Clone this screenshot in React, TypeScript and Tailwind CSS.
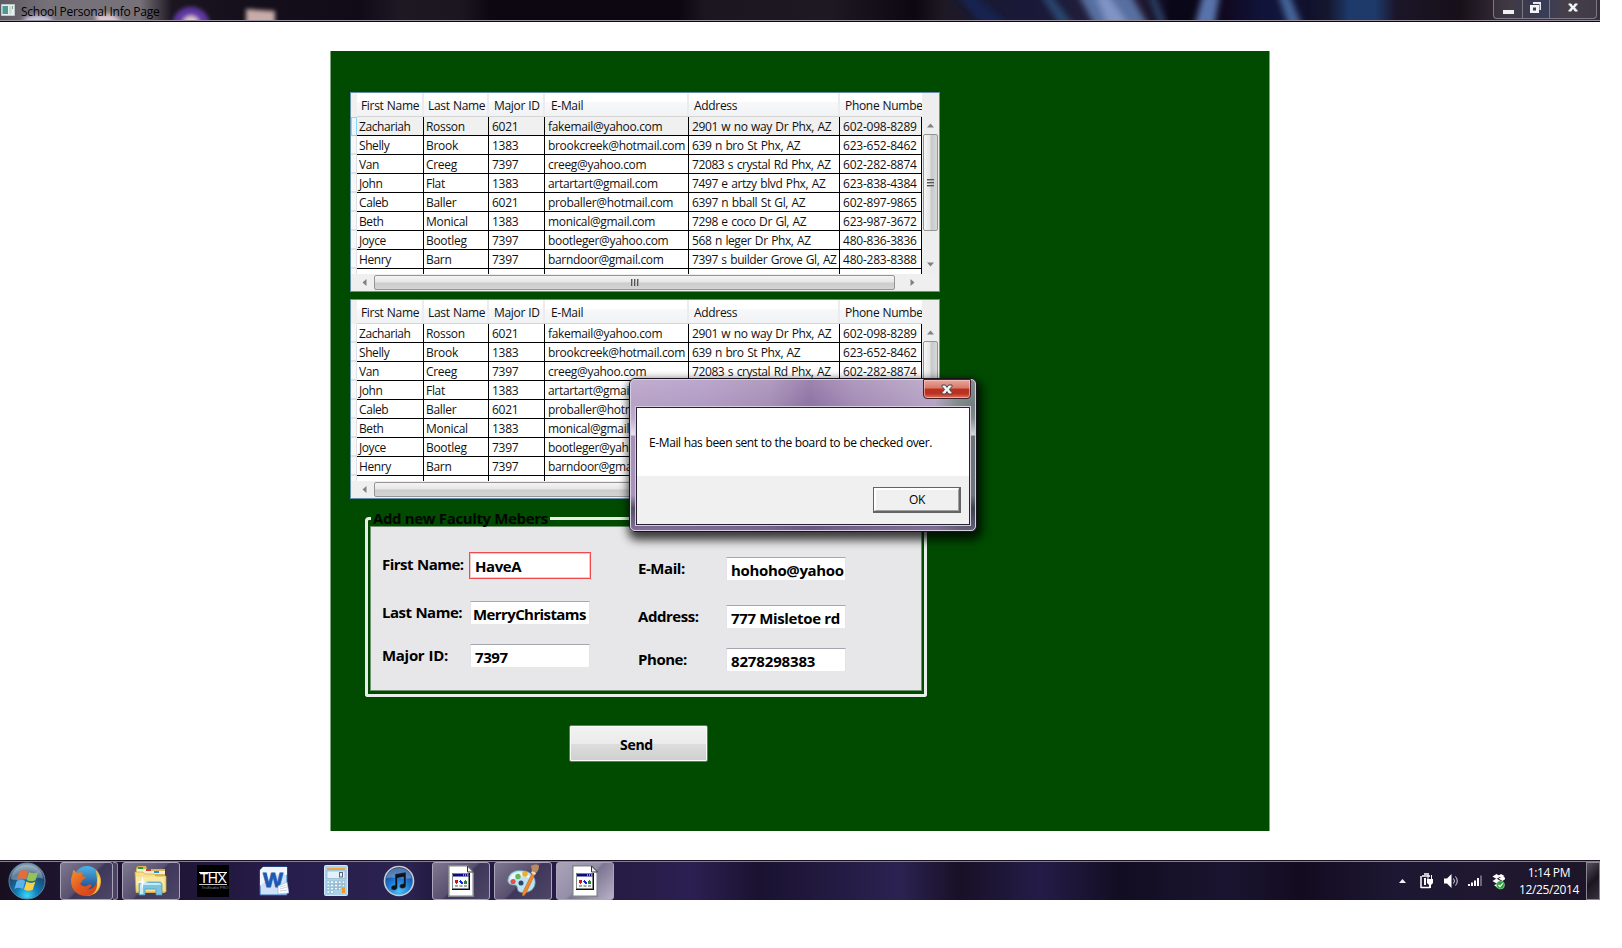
import React from "react";

const people = [
  ["Zachariah", "Rosson", "6021", "fakemail@yahoo.com", "2901 w no way Dr Phx, AZ", "602-098-8289"],
  ["Shelly", "Brook", "1383", "brookcreek@hotmail.com", "639 n bro St Phx, AZ", "623-652-8462"],
  ["Van", "Creeg", "7397", "creeg@yahoo.com", "72083 s crystal Rd Phx, AZ", "602-282-8874"],
  ["John", "Flat", "1383", "artartart@gmail.com", "7497 e artzy blvd Phx, AZ", "623-838-4384"],
  ["Caleb", "Baller", "6021", "proballer@hotmail.com", "6397 n bball St Gl, AZ", "602-897-9865"],
  ["Beth", "Monical", "1383", "monical@gmail.com", "7298 e coco Dr Gl, AZ", "623-987-3672"],
  ["Joyce", "Bootleg", "7397", "bootleger@yahoo.com", "568 n leger Dr Phx, AZ", "480-836-3836"],
  ["Henry", "Barn", "7397", "barndoor@gmail.com", "7397 s builder Grove Gl, AZ", "480-283-8388"],
];

const columns = [
  { title: "First Name", width: "w-[67px]", pad: "pl-[4px]", cell: "pl-[2px] tracking-[-0.42px]" },
  { title: "Last Name", width: "w-[65px]", pad: "pl-[4px]", cell: "pl-[2px] tracking-[-0.3px]" },
  { title: "Major ID", width: "w-[56px]", pad: "pl-[5px]", cell: "pl-[3px] tracking-[-0.25px]" },
  { title: "E-Mail", width: "w-[144px]", pad: "pl-[6px]", cell: "pl-[3px] tracking-[-0.32px]" },
  { title: "Address", width: "w-[151px]", pad: "pl-[5px]", cell: "pl-[3px] tracking-[-0.4px] [word-spacing:0.8px]" },
  { title: "Phone Numbe", width: "w-[82px]", pad: "pl-[5px]", cell: "pl-[3px] tracking-[-0.22px]" },
];

function Arrow({ d, className }: { d: string; className?: string }) {
  return (
    <svg width="7" height="7" viewBox="0 0 7 7" className={className}>
      <path d={d} fill="#808080" />
    </svg>
  );
}

function DataGrid({ selected }: { selected?: boolean }) {
  return (
    <div className="flex h-[200px] w-[590px] flex-col overflow-hidden border border-[#688caf] bg-[#f0f0f0] text-[12px] text-[#111]">
      <div className="flex h-[181px]">
        <div className="flex w-[6px] flex-col bg-[#f0f0f0]">
          <div className="h-6" />
          {people.map((p, i) => (
            <div
              key={p[0]}
              className={
                selected && i === 0
                  ? "h-[19px] border border-[#8fd3f5] bg-[#eef6fb]"
                  : "h-[19px] border-b-2 border-r border-[#dfe1e4] bg-[#f7f8fa]"
              }
            />
          ))}
          <div className="flex-1 border-r border-[#dfe1e4] bg-[#f7f8fa]" />
        </div>
        <div className="w-[565px] overflow-hidden bg-white">
          <div className="flex h-6 border-b border-[#d5d5d5] bg-[linear-gradient(#fff_0%,#fff_40%,#f7f8fa_41%,#f1f2f4_100%)]">
            {columns.map((c) => (
              <div key={c.title} className={`${c.width} ${c.pad} shrink-0 border-r-2 border-[#ececef] whitespace-nowrap leading-[25px] tracking-[-0.32px] [word-spacing:0.5px] last:border-r-0`}>
                {c.title}
              </div>
            ))}
          </div>
          {people.map((p, i) => (
            <div key={p[0]} className={`flex h-[19px] border-b border-black ${selected && i === 0 ? "bg-[#f0f0f0]" : "bg-white"}`}>
              {p.map((v, k) => (
                <div key={k} className={`${columns[k].width} ${columns[k].cell} shrink-0 whitespace-nowrap border-r border-black leading-[19px]`}>
                  {v}
                </div>
              ))}
            </div>
          ))}
          <div className="flex h-[5px]">
            {columns.map((c) => (
              <div key={c.title} className={`${c.width} shrink-0 border-r border-black`} />
            ))}
          </div>
        </div>
        <div className="flex flex-1 flex-col items-center bg-[#eeeeee] pt-6">
          <Arrow d="M0 5.5 L3.5 1.5 L7 5.5Z" className="mt-[5px]" />
          <div className="mt-[5px] flex h-[97px] w-[15px] flex-col items-center justify-center gap-px rounded-[2px] border border-[#959595] bg-[linear-gradient(90deg,#f6f6f6,#e6e6e6_45%,#c6c8ca_55%,#d8d8d8)]">
            {[0, 1, 2].map((n) => (
              <div key={n} className="h-[2px] w-[7px] border-b border-[#aaa] bg-[#555]" />
            ))}
          </div>
          <Arrow d="M0 1.5 L3.5 5.5 L7 1.5Z" className="mt-[30px]" />
        </div>
      </div>
      <div className="flex flex-1 items-center bg-[#efefef]">
        <Arrow d="M5.5 0 L1.5 3.5 L5.5 7Z" className="ml-[10px]" />
        <div className="ml-[6px] flex h-[15px] w-[521px] items-center justify-center gap-px rounded-[2px] border border-[#959595] bg-[linear-gradient(#f4f4f4,#e6e6e6_45%,#cbcccd_55%,#d4d4d4)]">
          {[0, 1, 2].map((n) => (
            <div key={n} className="h-[7px] w-[2px] border-r border-[#aaa] bg-[#555]" />
          ))}
        </div>
        <Arrow d="M1.5 0 L5.5 3.5 L1.5 7Z" className="ml-[14px]" />
      </div>
    </div>
  );
}

function TextBox({ value, error, tight }: { value: string; error?: boolean; tight?: boolean }) {
  return (
    <div
      className={
        error
          ? "-ml-px flex h-[27px] w-[122px] items-center overflow-hidden border border-[#f04c50] bg-white pl-[5px] pt-[2px] outline-1 -outline-offset-2 outline-[#fac4c6]"
          : `flex h-[23px] w-[120px] items-center overflow-hidden border-x border-t border-x-[#e2e3ea] border-t-[#a5a7af] bg-white pt-[3px] ${tight ? "pl-[2px] tracking-[-0.6px]" : "pl-[4px]"}`
      }
    >
      <span className="whitespace-nowrap">{value}</span>
    </div>
  );
}

function GroupBox() {
  return (
    <fieldset className="h-[180px] w-[562px] min-w-0">
      <div className="flex h-[9px] items-start">
        <div className="h-[9px] w-[6px] rounded-tl-[4px] border-l-[3px] border-t-[3px] border-[#e9eeea]" />
        <div className="flex h-[9px] w-[179px] items-start pl-[2px]">
          <span className="relative -mt-[9px] whitespace-nowrap text-[15px] font-bold leading-5 tracking-[-0.36px] text-[#020602]">Add new Faculty Mebers</span>
        </div>
        <div className="h-[9px] flex-1 rounded-tr-[4px] border-r-[3px] border-t-[3px] border-[#e9eeea]" />
      </div>
      <div className="h-[171px] rounded-b-[3px] border-x-[3px] border-b-[3px] border-[#e9eeea] px-[2px] pb-[3px]">
        <div className="flex h-full border border-[#6f916f] bg-[#e7e7e9] text-[15px] font-bold text-black">
          <div className="flex pl-[11px]">
            <div className="flex w-[88px] flex-col whitespace-nowrap pt-[27px] leading-5 tracking-[-0.5px] [word-spacing:0.5px]">
              <div className="h-12">First Name:</div>
              <div className="h-[43px]">Last Name:</div>
              <div className="tracking-[-0.3px]">Major ID:</div>
            </div>
            <div className="flex flex-col pt-[25px] tracking-[-0.4px]">
              <div className="h-[49px]"><TextBox value="HaveA" error /></div>
              <div className="h-[43px]"><TextBox value="MerryChristams" tight /></div>
              <TextBox value="7397" />
            </div>
          </div>
          <div className="flex pl-[47px]">
            <div className="flex w-[88px] flex-col whitespace-nowrap pt-[31px] leading-5 tracking-[-0.45px]">
              <div className="h-12">E-Mail:</div>
              <div className="h-[43px]">Address:</div>
              <div>Phone:</div>
            </div>
            <div className="flex flex-col pt-[30px] tracking-[-0.35px]">
              <div className="h-12"><TextBox value="hohoho@yahoo" /></div>
              <div className="h-[43px]"><TextBox value="777 Misletoe rd" /></div>
              <div className="tracking-[-0.15px]"><TextBox value="8278298383" /></div>
            </div>
          </div>
        </div>
      </div>
    </fieldset>
  );
}

function CrossGlyph({ width = 12 }: { width?: number }) {
  return (
    <svg width={width} height="11" viewBox="0 0 12 11">
      <path d="M1 1h3.4L6 3.4 7.6 1H11v1.4L8.4 5.500 11 8.600V10H7.600L6 7.600 4.400 10H1V8.600l2.600-3.100L1 2.400z" fill="#f4f5f7" stroke="#464452" strokeWidth="1" />
    </svg>
  );
}

function MessageDialog() {
  return (
    <div className="absolute left-[629px] top-[378px] flex h-[154px] w-[348px] flex-col rounded-[6px] border border-[#1b1420] bg-[linear-gradient(90deg,#b8a2c6_0%,#b29cc6_20%,#a78fb7_40%,#8e73a4_52%,#a48bb5_64%,#b6a4c5_88%,#7d8a88_95%,#717d7e_100%)] shadow-[2px_5px_10px_3px_rgba(0,0,0,0.75)]">
      <div className="flex flex-1 flex-col rounded-[5px] border border-[#d9cfe2] bg-[linear-gradient(rgba(255,255,255,0.12)_0px,rgba(255,255,255,0)_25px,rgba(255,255,255,0.1)_38px,rgba(255,255,255,0.7)_55px,rgba(60,40,90,0.15)_56px,rgba(60,40,90,0.1)_115px,rgba(30,35,50,0.65)_128px,rgba(80,60,110,0.5)_150px)] px-[4px]">
        <div className="flex h-[26px] items-start justify-end">
          <div className="-mt-px flex h-[20px] w-[48px] items-center justify-center rounded-b-[4px] border border-[#43202d] bg-[linear-gradient(#e5a99d_0%,#d67968_45%,#bd2f1d_50%,#b93222_75%,#dd7357_100%)] shadow-[inset_0_0_0_1px_rgba(255,210,200,0.6)]">
            <CrossGlyph />
          </div>
        </div>
        <div className="flex h-[120px] flex-col border border-[#d7cddd]">
          <div className="flex flex-1 flex-col border border-[#272030] bg-[#f0f0f0]">
            <div className="flex h-[68px] items-center bg-white pl-[12px] pt-px">
              <span className="whitespace-nowrap text-[12px] tracking-[-0.38px] text-black [word-spacing:0.3px]">E-Mail has been sent to the board to be checked over.</span>
            </div>
            <div className="flex justify-end pr-[8px] pt-[11px]">
              <div className="h-[26px] w-[88px] border border-b-2 border-r-2 border-[#646464] bg-[#f0f0f0]">
                <div className="flex h-full items-center justify-center border-b border-l-2 border-r border-t-2 border-b-[#a0a0a0] border-l-white border-r-[#a0a0a0] border-t-white text-[12px] tracking-[-0.3px] text-black">OK</div>
              </div>
            </div>
          </div>
        </div>
      </div>
    </div>
  );
}

function TitleBar() {
  return (
    <header className="relative flex h-[22px] w-[1600px] items-start overflow-hidden border-b border-[#0c0812] bg-[linear-gradient(90deg,#5f5a61_0px,#777279_50px,#777279_140px,#1b1620_172px,#15101b_230px,#110b18_360px,#1e1823_400px,#1c1621_462px,#0d0711_490px,#0d0711_680px,#1c1621_705px,#1e1823_830px,#0d0711_915px,#1e1823_942px,#1a1a34_985px,#191839_1030px,#1c1c3a_1060px,#2a2038_1130px,#120b22_1165px,#0a0719_1170px,#0a0719_1188px,#10071c_1219px,#10133a_1262px,#11163b_1280px,#11102c_1307px,#14172e_1328px,#1e3a6b_1350px,#1d3a6a_1375px,#1b1528_1396px,#171019_1460px,#2d2530_1492px,#37303b_1510px,#2c3250_1542px,#3c3540_1565px,#36303c_1600px)]">
      <svg width="1400" height="21" viewBox="0 0 1400 21" className="absolute left-0 top-0">
        <defs>
          <filter id="haze"><feGaussianBlur stdDeviation="2" /></filter>
          <filter id="glow"><feGaussianBlur stdDeviation="3" /></filter>
        </defs>
        <g filter="url(#haze)">
          <circle cx="191" cy="26" r="19" fill="#6038a6" />
          <circle cx="191" cy="24" r="8" fill="#e5cdcd" />
          <path d="M246 9l29 2v14h-29z" fill="#c7aca9" />
          <ellipse cx="38" cy="22" rx="15" ry="7" fill="#c8c5e0" />
          <path d="M95 14h18l14 12H98z" fill="#dbc5cf" />
        </g>
        <g filter="url(#glow)">
          <path d="M955-6h18l40 34h-28z" fill="#16244f" />
          <path d="M1040-6h10l26 34h-14z" fill="#2a4670" />
          <path d="M1078-6h52l20 34h-54z" fill="#566fa0" />
          <path d="M1095-6h12l24 34h-22z" fill="#8094c4" />
          <path d="M1148-6h6l14 34h-8z" fill="#29446b" />
          <path d="M1203-6h17l-6 34h-20z" fill="#5873ac" />
          <path d="M1278-6h11l14 34h-14z" fill="#45659a" />
        </g>
      </svg>
      <div className="relative flex h-5 flex-1 items-center pl-px">
        <svg width="14" height="12" viewBox="0 0 14 12">
          <path d="M.5.5h13v11H.5z" fill="#e8eeee" stroke="#bfc5c9" />
          <path d="M1.500 2h5.500v8H1.500z" fill="#4d9a92" />
          <path d="M8 2h2.500v8H8z" fill="#cbdad2" />
          <path d="M11 2h1v3h-1z" fill="#7aa98a" />
        </svg>
        <span className="ml-[6px] whitespace-nowrap pt-[3px] text-[12px] leading-4 tracking-[-0.24px] text-black">School Personal Info Page</span>
      </div>
      <div className="relative mr-[3px] flex h-[19px] w-[104px] rounded-b-[4px] border border-t-0 border-[#7d7884] bg-white/5">
        <div className="flex w-[29px] items-center justify-center border-r border-[#7d7884] pt-[3px]">
          <div className="mt-[2px] h-[4px] w-[11px] bg-[#f0f0f2]" />
        </div>
        <div className="flex w-[27px] items-center justify-center border-r border-[#7d7884] pb-[3px]">
          <svg width="12" height="12" viewBox="0 0 12 12"><path d="M3 0h8v8H9.500V2H3z" fill="#e9e9ee" /><path fillRule="evenodd" d="M0 3h9v8H0z M3 5.500v3h3v-3z" fill="#f4f4f6" /></svg>
        </div>
        <div className="flex flex-1 items-center justify-center pb-[3px]"><CrossGlyph /></div>
      </div>
      <div className="absolute bottom-0 left-0 h-px w-full bg-[#9a919f]" />
    </header>
  );
}

function StartOrb() {
  return (
    <svg width="38" height="38" viewBox="0 0 38 38">
      <defs>
        <radialGradient id="orb" cx="50%" cy="90%" r="85%">
          <stop offset="0" stopColor="#39d8fb" /><stop offset=".35" stopColor="#127db7" /><stop offset=".75" stopColor="#1f476e" /><stop offset="1" stopColor="#8098ae" />
        </radialGradient>
      </defs>
      <circle cx="19" cy="19" r="18" fill="url(#orb)" stroke="#5a89a8" />
      <path d="M3 17C4 7 12 3 19 3s15 4 16 14c-9-4-22 4-32 0z" fill="#fff" opacity=".3" />
      <path d="M11.500 9.500c3-2 6-1.500 8.500 0l-2.400 8c-3-1.600-5.500-1.800-8.500 0z" fill="#ec6a35" />
      <path d="M21 10c3 1.700 6 1.800 9 .3l-2.500 8c-3 1.500-6 1.300-8.800-.3z" fill="#94c455" />
      <path d="M8.700 19c3-1.700 6-1.500 8.600 0l-2.400 8c-3-1.700-5.700-1.700-8.500 0z" fill="#5fb2ec" />
      <path d="M18.400 19.600c3 1.600 6 1.800 8.900.2l-2.500 8c-3 1.600-6 1.300-8.800-.3z" fill="#fbcf45" />
    </svg>
  );
}

function FirefoxIcon() {
  return (
    <svg width="32" height="32" viewBox="0 0 32 32">
      <defs>
        <linearGradient id="fx" x1="0" y1="0" x2="1" y2="1"><stop offset="0" stopColor="#f0932c" /><stop offset=".5" stopColor="#e2571f" /><stop offset="1" stopColor="#d0401a" /></linearGradient>
        <linearGradient id="globe" x1="0" y1="0" x2="0" y2="1"><stop offset="0" stopColor="#4db5e8" /><stop offset="1" stopColor="#1a3d82" /></linearGradient>
      </defs>
      <circle cx="17" cy="14" r="13" fill="url(#globe)" />
      <path d="M26 5c4 4 6 9 4.500 15C29 27 23 31 16 31l2-6c6 0 9-4 9-10 0-4-1-7-1-10z" fill="#f8b731" />
      <path d="M28 10c2 3 2 7 1 11-1 2-2 3-3 4 2-5 2-10 2-15z" fill="#ffe069" />
      <path d="M3 5c1 0 3 2 4 3 2-1 5-1 7 0-2 1-2 2-2 3l4 1c0 2-3 2-4 4 0 2-1 2-2 2 1 4 6 4 8 2 2-1 4 0 4 1-2 1-2 3-5 3 4 1 8-2 10-7 1 8-4 14-11 14C8 31 1 25 1 16 1 12 3 10 3 5z" fill="url(#fx)" />
    </svg>
  );
}

function ExplorerIcon() {
  return (
    <svg width="34" height="32" viewBox="0 0 34 32">
      <path d="M2 3l2-2h8l1 3h18v24H2z" fill="#d8b45a" />
      <path d="M3 4h10l2 2h16v3H3z" fill="#f7efc9" />
      <path d="M4 2h5v2H4z" fill="#25a02c" /><path d="M12 4h5v2h-5z" fill="#d9372c" /><path d="M20 6h5v2h-5z" fill="#2c8fd9" />
      <path d="M1 7h8l2 2h9l2 2h10v16H2z" fill="#f5df8d" stroke="#cda64c" strokeWidth=".7" />
      <path d="M2 12h28v8H2z" fill="#fff4b8" opacity=".45" />
      <path d="M5 30V20c0-2 1-3 3-3h17c2 0 3 1 3 3v10h-6v-6H11v6z" fill="#7cc3df" stroke="#4d96b8" strokeWidth=".7" />
      <path d="M6 21c0-2 1-3 3-3h15c2 0 3 1 3 2H9v9H6z" fill="#c5ebf5" />
      <path d="M8.500 11l1 5 5 1-5 1-1 6-1-6-5-1 5-1z" fill="#fff" />
    </svg>
  );
}

function ThxIcon() {
  return (
    <div className="flex h-8 w-8 flex-col items-center bg-black pt-[7px] text-white">
      <div className="h-px w-[28px] bg-white" />
      <div className="font-['Liberation_Sans'] text-[14px] leading-[11px] tracking-[-0.5px]">THX</div>
      <div className="h-px w-[28px] bg-[#ccc]" />
      <div className="whitespace-nowrap pl-1 font-['Liberation_Sans'] text-[4px] leading-[5px] text-[#888]">TruStudio PRO</div>
    </div>
  );
}

function WordIcon() {
  return (
    <svg width="30" height="30" viewBox="0 0 30 30">
      <path d="M4 1h24v28H1V4z" fill="#cfe1f6" stroke="#2c68b4" />
      <path d="M4 1h24v8C18 6 10 12 1 20V4z" fill="#eff6fd" />
      <text x="4" y="21" fontFamily="Liberation Sans" fontWeight="bold" fontSize="21" fill="#1f58b0" stroke="#1f58b0" strokeWidth=".8" textLength="20" lengthAdjust="spacingAndGlyphs">W</text>
      <path d="M19 20l9-4 2 11-11 1z" fill="#fff" stroke="#8aa6cc" strokeWidth=".6" />
      <path d="M21 21l6-2M21 23l7-2M21 25l7-1" stroke="#a9bfdc" strokeWidth=".7" />
    </svg>
  );
}

function CalcIcon() {
  const keys = [0, 1, 2, 3, 4, 5, 6, 7, 8, 9, 10, 11, 12, 13, 14, 15, 16];
  return (
    <svg width="24" height="31" viewBox="0 0 24 31">
      <rect x=".5" y=".5" width="23" height="30" rx="1" fill="#abd2ea" stroke="#d3eaf6" />
      <path d="M3 3h18v2H3z" fill="#eda541" /><path d="M3 6h18v7.500H3z" fill="#e3f1f9" stroke="#86a9bf" strokeWidth=".6" />
      <rect x="15.500" y="7.500" width="3" height="4.500" fill="none" stroke="#58697a" strokeWidth="1" />
      {keys.map((k) => (
        <rect key={k} x={3 + (k % 5) * 3.8} y={16 + Math.floor(k / 5) * 3.3} width="2.600" height="2.200" fill="#f4fbff" stroke="#6b96b3" strokeWidth=".4" />
      ))}
      <path d="M18 23h3v5h-3z" fill="#ee9b2d" />
    </svg>
  );
}

function ItunesIcon() {
  return (
    <svg width="32" height="32" viewBox="0 0 32 32">
      <defs><radialGradient id="tune" cx="50%" cy="85%" r="80%"><stop offset="0" stopColor="#46c4fa" /><stop offset=".5" stopColor="#1b78d6" /><stop offset="1" stopColor="#143a78" /></radialGradient></defs>
      <circle cx="16" cy="16" r="14.500" fill="url(#tune)" stroke="#c8ccd2" strokeWidth="1.600" />
      <path d="M3 13C5 6 10 3 16 3s11 3 13 10c-8 2-18-2-26 0z" fill="#fff" opacity=".28" />
      <path d="M12 9l11-2v13.500c0 2-1.500 3-3.500 3s-3-1-3-2.300c0-1.700 1.700-2.700 4-2.700V12l-6 1.200V22c0 2-1.500 3.200-3.500 3.200S8 24 8 22.800c0-1.800 1.800-2.800 4-2.800z" fill="#0e1320" stroke="#5e8dbc" strokeWidth=".5" />
    </svg>
  );
}

function DocIcon() {
  return (
    <svg width="26" height="32" viewBox="0 0 26 32">
      <path d="M.8.8h18.700l5.700 6V31.200H.8z" fill="#fff" stroke="#84868a" strokeWidth="1.500" />
      <path d="M19.500 1v6h6z" fill="#eee" stroke="#333" />
      <path d="M4 8h18v17H4z" fill="#101010" /><path d="M4.500 8.500h16v15h-16z" fill="#fafafa" stroke="#888" strokeWidth=".6" />
      <path d="M5 9h15.500v2.500H5z" fill="#0a0a83" /><path d="M15 9.500h1v1h-1zM17 9.500h1v1h-1zM19 9.500h1v1h-1z" fill="#fff" />
      <path d="M7 15h2v1h1v2H9v1H8v-1H7z" fill="#d5141d" /><path d="M12 15h1v1h1v1h1v2h-2v-1h-1z" fill="#1428d0" /><path d="M17 15h1v1h1v3h-3v-3h1z" fill="#168c22" />
      <path d="M9 15h1v1H9z" fill="#2428d0" /><path d="M11 16h1v1h-1z" fill="#c82020" />
      <path d="M7 21h3M11.500 21h3M16 21h3" stroke="#555" />
    </svg>
  );
}

function PaintIcon() {
  return (
    <svg width="34" height="33" viewBox="0 0 34 33">
      <path d="M2 15C3 8 11 5 18 7c8 1 12 7 11 13-1 7-9 10-15 8-4-1-1-6-5-7-4 0-8-1-7-6z" fill="#bfe2f2" stroke="#6c9db7" strokeWidth=".8" />
      <path d="M4 14C6 9 12 7 18 9c5 1 8 4 9 8C20 10 12 12 4 17z" fill="#eaf8fd" />
      <circle cx="7" cy="17.500" r="2.600" fill="#df5147" /><circle cx="12" cy="12.500" r="2.700" fill="#64b85a" /><circle cx="19" cy="10" r="2.800" fill="#f0ae2d" /><circle cx="15" cy="19" r="2.500" fill="#28486d" />
      <path d="M27 7l3 1-9 19c-1 3-3 5-4 5s-1-3 1-6z" fill="#ee8b2c" stroke="#a85a1e" strokeWidth=".5" />
      <path d="M25 2c3-2 7-2 8 0 0 3-1 5-3 7l-4-2z" fill="#b98b65" /><path d="M26 7l4 2-1 2-4-2z" fill="#e6dfd5" />
    </svg>
  );
}

function TaskButton({ children, active, className }: { children: React.ReactNode; active?: boolean; className?: string }) {
  return (
    <div className={`flex h-[38px] items-center justify-center rounded-[3px] border border-[#aba5bb] ${active ? "bg-[linear-gradient(135deg,#aaa4b8_0%,#958ea8_48%,#7d7592_52%,#b8b1c6_100%)]" : "bg-[linear-gradient(135deg,#7f7891_0%,#58506d_48%,#3f375a_52%,#4e4666_100%)]"} ${className ?? ""}`}>
      {children}
    </div>
  );
}

function Taskbar() {
  return (
    <footer className="flex h-[40px] w-[1600px] items-center border-t border-[#1a1420] bg-[linear-gradient(90deg,#170f1f_0px,#1f1430_60px,#1f1638_190px,#281e4d_290px,#2a2250_410px,#241b43_430px,#261c45_630px,#2b2053_690px,#1a1230_760px,#2b2252_900px,#181026_960px,#241c48_1040px,#130d22_1120px,#1a1430_1230px,#130c20_1300px,#1d1733_1400px,#201830_1490px,#1c1426_1600px)] shadow-[inset_0_1px_0_#85808f]">
      <div className="ml-2 flex w-[38px]"><StartOrb /></div>
      <div className="ml-[14px] flex">
        <TaskButton className="w-[53px] pr-[2px]"><FirefoxIcon /></TaskButton>
        <div className="h-[38px] w-[5px] rounded-r-[3px] border border-l-0 border-[#8e879f] bg-[#4b4362]" />
      </div>
      <TaskButton className="ml-1 w-[58px]"><ExplorerIcon /></TaskButton>
      <div className="ml-[17px]"><ThxIcon /></div>
      <div className="ml-[30px]"><WordIcon /></div>
      <div className="ml-[35px]"><CalcIcon /></div>
      <div className="ml-[35px]"><ItunesIcon /></div>
      <TaskButton className="ml-[17px] w-[58px]"><DocIcon /></TaskButton>
      <TaskButton className="ml-1 w-[58px]"><PaintIcon /></TaskButton>
      <TaskButton active className="ml-1 w-[58px]"><DocIcon /></TaskButton>
      <div className="flex flex-1 items-center justify-end">
        <svg width="110" height="18" viewBox="0 0 110 18">
          <path d="M4 11l3.500-4 3.500 4z" fill="#f2f2f4" />
          <path d="M27 4h8M26 4v12M26 15.500h9M29 2h5" stroke="#fff" strokeWidth="1.500" fill="none" />
          <path d="M29 6h2v7h-2zM32 7h6v4l-2 2v3h-2v-3l-2-2zM32.500 3h1v4h-1zM36 3h1v4h-1z" fill="#fff" />
          <path d="M49 6.500h3L56.500 2v14L52 11.500h-3z" fill="#fff" />
          <path d="M58.500 6.500q2 2.500 0 5M60.500 4.500q3.500 4.500 0 9" stroke="#d8d8e0" fill="none" />
          <path d="M73 12h2v2h-2zM76 10.500h2V14h-2zM79 8.500h2V14h-2zM82 6h2v8h-2z" fill="#fff" /><path d="M85 3.500h2V14h-2z" fill="#6c6678" />
          <path d="M101.500 2l4 2.500-4 2.500-4-2.500zM108 4.500l3 2-3.500 2.500-4-2.500zM97.500 9l4-2.500 4 2.500-4 2.500zM99 13l3-1 3 1-3 2.500z" fill="#fff" />
          <path d="M106 2l3.500 2-3 2-3.500-2z" fill="#fff" />
          <circle cx="105.500" cy="13" r="4" fill="#28a536" stroke="#a6dcac" strokeWidth=".6" /><path d="M103.500 13l1.500 1.600 2.700-3.200" stroke="#fff" fill="none" strokeWidth="1.200" />
        </svg>
        <div className="flex w-[81px] flex-col items-center pl-[7px] text-[12px] leading-[17px] tracking-[-0.36px] text-white">
          <span>1:14 PM</span>
          <span>12/25/2014</span>
        </div>
        <div className="h-[38px] w-[14px] border border-[#8b8593] bg-[linear-gradient(135deg,#57505f_0%,#1b1520_50%,#39323f_100%)]" />
      </div>
    </footer>
  );
}

export default function App() {
  return (
    <div className="relative flex h-[948px] w-[1622px] flex-col overflow-hidden bg-white font-['Open_Sans','Noto_Sans',sans-serif]">
      <TitleBar />
      <main className="flex h-[838px] w-[1600px] justify-center pt-[29px]">
        <div className="flex h-[780px] w-[940px] flex-col items-start border-x border-[#7fa37f] bg-[#004b00] pl-[19px] pt-[41px]">
          <DataGrid selected />
          <div className="h-[7px]" />
          <DataGrid />
          <div className="ml-[15px] mt-[18px]"><GroupBox /></div>
          <button className="ml-[219px] mt-[28px] flex h-[37px] w-[139px] items-center justify-center rounded-[2px] border border-[#707070] bg-[linear-gradient(#f2f2f2_0%,#ebebeb_50%,#dddddd_51%,#cfcfcf_100%)] pr-1 pt-[2px] text-[14px] font-bold tracking-[-0.3px] text-black shadow-[inset_0_0_0_1px_#fafafa]">
            Send
          </button>
        </div>
      </main>
      <Taskbar />
      <MessageDialog />
    </div>
  );
}
